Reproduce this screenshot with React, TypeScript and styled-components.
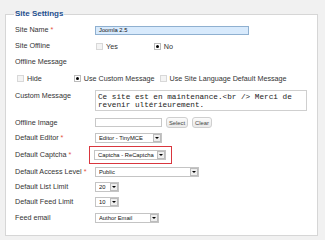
import React from 'react';
import styled, { createGlobalStyle } from 'styled-components';

const GlobalStyle = createGlobalStyle`
  body {
    margin: 0;
    background: #f1f1f1;
    font-family: "Liberation Sans", Arial, sans-serif;
  }
`;

const Page = styled.div`
  width: 325px;
  height: 240px;
  padding: 9px 0 0 5px;
  box-sizing: border-box;
  overflow: hidden;
`;

const Fieldset = styled.fieldset`
  margin: 0;
  width: 313px;
  height: 227px;
  box-sizing: border-box;
  padding: 0 0 0 9px;
  background: #fff;
  border: 1px solid #d6d6d6;
  min-inline-size: 0;
`;

const Legend = styled.legend`
  padding: 0 1px;
  margin-left: -1px;
  font-size: 8px;
  line-height: 10px;
  font-weight: bold;
  color: #1e4f8f;
`;

const Rows = styled.div`
  margin-top: 3px;
  display: flex;
  flex-direction: column;
`;

const Row = styled.div<{ $h: number; $top?: boolean }>`
  height: ${(p) => p.$h}px;
  display: flex;
  align-items: ${(p) => (p.$top ? 'flex-start' : 'center')};
  padding-top: ${(p) => (p.$top ? 4 : 0)}px;
  box-sizing: border-box;
`;

const Label = styled.div`
  width: 80px;
  flex: none;
  font-size: 7.2px;
  line-height: 12px;
  color: #333;
`;

const Star = styled.span`
  color: #e5533d;
  margin-left: 2px;
`;

const TextInput = styled.div<{ $w: number; $focus?: boolean }>`
  width: ${(p) => p.$w}px;
  height: 9px;
  box-sizing: border-box;
  border: 1px solid ${(p) => (p.$focus ? '#8fb0d0' : '#c8c8c8')};
  background: ${(p) => (p.$focus ? '#d8eafc' : '#fff')};
  font-size: 5.8px;
  line-height: 7px;
  padding-left: 3px;
  color: #111;
`;

const Choices = styled.div`
  display: flex;
  align-items: center;
`;

const Choice = styled.label<{ $ml?: number }>`
  display: flex;
  align-items: center;
  gap: 3px;
  margin-left: ${(p) => p.$ml ?? 0}px;
  font-size: 7.2px;
  color: #333;
`;

const Radio = styled.span<{ $on?: boolean }>`
  width: 7px;
  height: 7px;
  box-sizing: border-box;
  display: inline-flex;
  align-items: center;
  justify-content: center;
  border: 1px solid ${(p) => (p.$on ? '#bbb' : '#d8d8d8')};
  background: ${(p) => (p.$on ? '#fff' : '#f4f4f4')};
  &::after {
    content: '';
    width: 3px;
    height: 3px;
    border-radius: 50%;
    background: ${(p) => (p.$on ? '#000' : 'transparent')};
  }
`;

const TextArea = styled.div`
  width: 212px;
  height: 21px;
  box-sizing: border-box;
  border: 1px solid #cfcfcf;
  padding: 2px 0 0 2px;
  font-family: "Liberation Mono", "Courier New", monospace;
  font-size: 7.7px;
  line-height: 8px;
  color: #222;
  white-space: pre;
`;

const Button = styled.span<{ $w: number }>`
  width: ${(p) => p.$w}px;
  height: 11px;
  box-sizing: border-box;
  margin-left: 4px;
  display: inline-flex;
  align-items: center;
  justify-content: center;
  border: 1px solid #cfcfcf;
  border-radius: 3px;
  background: linear-gradient(#fbfbfb, #e9e9e9);
  font-size: 5.8px;
  color: #444;
`;

const Select = styled.div<{ $w: number }>`
  width: ${(p) => p.$w}px;
  height: 10px;
  box-sizing: border-box;
  display: flex;
  align-items: center;
  border: 1px solid #c4c4c4;
  background: #fff;
  font-size: 5.8px;
  color: #111;
  padding-left: 3px;
`;

const SelectText = styled.span`
  flex: 1;
  white-space: nowrap;
  overflow: hidden;
`;

const Arrow = styled.span`
  width: 8px;
  height: 8px;
  box-sizing: border-box;
  flex: none;
  display: flex;
  align-items: center;
  justify-content: center;
  border: 1px solid #bcbcbc;
  background: #eeeeee;
  &::after {
    content: '';
    border-left: 2px solid transparent;
    border-right: 2px solid transparent;
    border-top: 2px solid #000;
  }
`;

const Highlight = styled.div`
  margin-left: -6px;
  padding: 3px 5px 3px 4px;
  border: 1.5px solid #d9363e;
  display: flex;
`;

type DropProps = { w: number; text: string };
const Drop = ({ w, text }: DropProps) => (
  <Select $w={w}>
    <SelectText>{text}</SelectText>
    <Arrow />
  </Select>
);

export default function App() {
  return (
    <Page>
      <GlobalStyle />
      <Fieldset>
        <Legend>Site Settings</Legend>
        <Rows>
          <Row $h={16}>
            <Label>Site Name<Star>*</Star></Label>
            <TextInput $w={154} $focus>Joomla 2.5</TextInput>
          </Row>
          <Row $h={16}>
            <Label>Site Offline</Label>
            <Choices>
              <Choice $ml={1}><Radio />Yes</Choice>
              <Choice $ml={36}><Radio $on />No</Choice>
            </Choices>
          </Row>
          <Row $h={16}>
            <Label>Offline Message</Label>
          </Row>
          <Row $h={16}>
            <Choices>
              <Choice $ml={2}><Radio />Hide</Choice>
              <Choice $ml={32}><Radio $on />Use Custom Message</Choice>
              <Choice $ml={5}><Radio />Use Site Language Default Message</Choice>
            </Choices>
          </Row>
          <Row $h={29} $top>
            <Label>Custom Message</Label>
            <TextArea>{'Ce site est en maintenance.<br /> Merci de\nrevenir ultérieurement.'}</TextArea>
          </Row>
          <Row $h={15}>
            <Label>Offline Image</Label>
            <TextInput $w={67} />
            <Button $w={22}>Select</Button>
            <Button $w={20}>Clear</Button>
          </Row>
          <Row $h={16}>
            <Label>Default Editor<Star>*</Star></Label>
            <Drop w={67} text="Editor - TinyMCE" />
          </Row>
          <Row $h={18}>
            <Label>Default Captcha<Star>*</Star></Label>
            <Highlight>
              <Drop w={72} text="Captcha - ReCaptcha" />
            </Highlight>
          </Row>
          <Row $h={15}>
            <Label>Default Access Level<Star>*</Star></Label>
            <Drop w={104} text="Public" />
          </Row>
          <Row $h={15}>
            <Label>Default List Limit</Label>
            <Drop w={24} text="20" />
          </Row>
          <Row $h={16}>
            <Label>Default Feed Limit</Label>
            <Drop w={24} text="10" />
          </Row>
          <Row $h={15}>
            <Label>Feed email</Label>
            <Drop w={64} text="Author Email" />
          </Row>
        </Rows>
      </Fieldset>
    </Page>
  );
}
